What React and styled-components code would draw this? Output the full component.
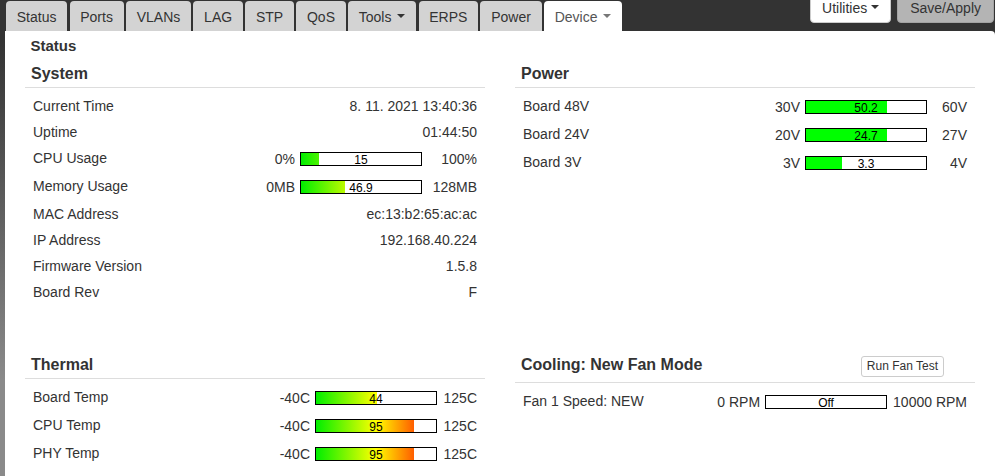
import React from "react";
import styled, { createGlobalStyle } from "styled-components";

const GlobalStyle = createGlobalStyle`
  html, body { margin: 0; padding: 0; height: 100%; overflow: hidden; }
  body {
    background: linear-gradient(to bottom, #333 0, #333 40px, #8a8a8a 380px, #8a8a8a 100%);
    font-family: "Liberation Sans", Arial, sans-serif;
    color: #333;
  }
`;

const TopBar = styled.header`
  display: flex;
  justify-content: space-between;
  align-items: flex-start;
  height: 31px;
  box-sizing: border-box;
  padding: 0 1px 0 6px;
`;

const Tabs = styled.nav`
  display: flex;
  gap: 2.3px;
  align-self: flex-end;
`;

const Tab = styled.div`
  height: 30px;
  box-sizing: border-box;
  padding: 2px 10.75px 0;
  line-height: 28px;
  font-size: 14px;
  border-radius: 4px 4px 0 0;
  background: ${(p) => (p.$active ? "#fff" : "#d3d3d3")};
  color: ${(p) => (p.$active ? "#555" : "#333")};
  white-space: nowrap;
`;

const Caret = styled.span`
  display: inline-block;
  width: 0;
  height: 0;
  margin-left: ${(p) => p.$gap || 5}px;
  margin-bottom: 4px;
  vertical-align: middle;
  border-top: 4px solid ${(p) => p.$color || "#333"};
  border-left: 4px solid transparent;
  border-right: 4px solid transparent;
`;

const Toolbar = styled.div`
  display: flex;
  gap: 6px;
  margin-top: -4px;
`;

const ToolButton = styled.button`
  font: 14px/18px "Liberation Sans", Arial, sans-serif;
  color: #333;
  height: 27px;
  box-sizing: border-box;
  padding: 2px ${(p) => (p.$primary ? 12 : 11)}px 5px;
  border: 1px solid ${(p) => (p.$primary ? "#a3a3a3" : "#ccc")};
  background: ${(p) => (p.$primary ? "#b4b4b4" : "#fff")};
  border-radius: 4px;
  white-space: nowrap;
`;

const Panel = styled.main`
  margin-left: 5px;
  background: #fff;
  border-top-right-radius: 4px;
  min-height: calc(100vh - 31px);
  box-sizing: border-box;
  padding: 6px 20px 0;
`;

const PageTitle = styled.h2`
  margin: 0;
  padding-left: 5.5px;
  font-size: 15px;
  line-height: 18px;
  font-weight: bold;
  color: #333;
`;

const Grid = styled.div`
  display: grid;
  grid-template-columns: 460px 460px;
  column-gap: 30px;
  row-gap: 50px;
  margin-top: 9px;
  align-items: start;
`;

const Section = styled.section``;

const SectionHeader = styled.div`
  display: flex;
  justify-content: space-between;
  align-items: flex-start;
  padding: 0 6px 3px;
  border-bottom: 1px solid #ddd;
`;

const SectionTitle = styled.h3`
  margin: 0;
  font-size: 16px;
  line-height: 20px;
  font-weight: bold;
  color: #333;
`;

const SmallButton = styled.button`
  font: 12px/15px "Liberation Sans", Arial, sans-serif;
  color: #333;
  background: #fff;
  border: 1px solid #ccc;
  border-radius: 3px;
  padding: 2px 5px;
  height: 21px;
  box-sizing: border-box;
  margin: 1px 25px 2px 0;
`;

const Rows = styled.div`
  padding-top: 5px;
`;

const Row = styled.div`
  display: flex;
  justify-content: space-between;
  align-items: flex-start;
  padding: 4px 8px;
  font-size: 14px;
  line-height: 18px;
`;

const Label = styled.span``;
const Value = styled.span`
  text-align: right;
`;

const Gauge = styled.div`
  display: flex;
  align-items: center;
  height: 20px;
`;

const GaugeMin = styled.span`
  text-align: right;
  margin-right: 5px;
  white-space: nowrap;
`;

const GaugeMax = styled.span`
  text-align: right;
  white-space: nowrap;
  flex-shrink: 0;
  ${(p) => (p.$w ? `width: ${p.$w}px;` : "padding-left: 6px;")}
`;

const Bar = styled.div`
  width: 122px;
  height: 14px;
  box-sizing: border-box;
  border: 1px solid #000;
  background: #fff;
  display: grid;
  grid-template-columns: 120px;
  grid-template-rows: 12px;
  flex-shrink: 0;
`;

const Fill = styled.div`
  grid-area: 1 / 1;
  justify-self: start;
  height: 12px;
  background: ${(p) =>
    p.$solid
      ? "#00ff00"
      : "linear-gradient(to right, #00ee00, #ffff00 50%, #ff0000)"};
  background-size: 120px 100%;
`;

const BarText = styled.span`
  grid-area: 1 / 1;
  align-self: start;
  text-align: center;
  font-size: 12px;
  line-height: 14px;
  color: #000;
`;

function Meter({ min, max, minLabel, maxLabel, value, text, solid, maxWidth }) {
  const pct = Math.max(0, Math.min(100, ((value - min) / (max - min)) * 100));
  return (
    <Gauge>
      <GaugeMin>{minLabel}</GaugeMin>
      <Bar>
        <Fill $solid={solid} style={{ width: `${pct}%` }} />
        <BarText>{text ?? value}</BarText>
      </Bar>
      <GaugeMax $w={maxWidth}>{maxLabel}</GaugeMax>
    </Gauge>
  );
}

const tabs = [
  { name: "Status" },
  { name: "Ports" },
  { name: "VLANs" },
  { name: "LAG" },
  { name: "STP" },
  { name: "QoS" },
  { name: "Tools", menu: true },
  { name: "ERPS" },
  { name: "Power" },
  { name: "Device", menu: true, active: true },
];

const systemRows = [
  { label: "Current Time", value: "8. 11. 2021 13:40:36" },
  { label: "Uptime", value: "01:44:50" },
  { label: "CPU Usage", meter: { min: 0, max: 100, minLabel: "0%", maxLabel: "100%", value: 15 } },
  { label: "Memory Usage", meter: { min: 0, max: 128, minLabel: "0MB", maxLabel: "128MB", value: 46.9 } },
  { label: "MAC Address", value: "ec:13:b2:65:ac:ac" },
  { label: "IP Address", value: "192.168.40.224" },
  { label: "Firmware Version", value: "1.5.8" },
  { label: "Board Rev", value: "F" },
];

const powerRows = [
  { label: "Board 48V", meter: { min: 30, max: 60, minLabel: "30V", maxLabel: "60V", value: 50.2, solid: true } },
  { label: "Board 24V", meter: { min: 20, max: 27, minLabel: "20V", maxLabel: "27V", value: 24.7, solid: true } },
  { label: "Board 3V", meter: { min: 3, max: 4, minLabel: "3V", maxLabel: "4V", value: 3.3, solid: true } },
];

const thermalRows = [
  { label: "Board Temp", meter: { min: -40, max: 125, minLabel: "-40C", maxLabel: "125C", value: 44 } },
  { label: "CPU Temp", meter: { min: -40, max: 125, minLabel: "-40C", maxLabel: "125C", value: 95 } },
  { label: "PHY Temp", meter: { min: -40, max: 125, minLabel: "-40C", maxLabel: "125C", value: 95 } },
];

const fanRows = [
  { label: "Fan 1 Speed: NEW", meter: { min: 0, max: 10000, minLabel: "0 RPM", maxLabel: "10000 RPM", value: 0, text: "Off" } },
];

function InfoTable({ rows, maxWidth }) {
  return (
    <Rows>
      {rows.map((r) => (
        <Row key={r.label}>
          <Label>{r.label}</Label>
          {r.meter ? <Meter {...r.meter} maxWidth={maxWidth} /> : <Value>{r.value}</Value>}
        </Row>
      ))}
    </Rows>
  );
}

export default function App() {
  return (
    <>
      <GlobalStyle />
      <TopBar>
        <Tabs>
          {tabs.map((t) => (
            <Tab key={t.name} $active={t.active}>
              {t.name}
              {t.menu && <Caret $gap={6} $color={t.active ? "#777" : "#333"} />}
            </Tab>
          ))}
        </Tabs>
        <Toolbar>
          <ToolButton>
            Utilities
            <Caret $gap={4} />
          </ToolButton>
          <ToolButton $primary>Save/Apply</ToolButton>
        </Toolbar>
      </TopBar>
      <Panel>
        <PageTitle>Status</PageTitle>
        <Grid>
          <Section>
            <SectionHeader>
              <SectionTitle>System</SectionTitle>
            </SectionHeader>
            <InfoTable rows={systemRows} maxWidth={55} />
          </Section>
          <Section>
            <SectionHeader>
              <SectionTitle>Power</SectionTitle>
            </SectionHeader>
            <InfoTable rows={powerRows} maxWidth={40} />
          </Section>
          <Section>
            <SectionHeader>
              <SectionTitle>Thermal</SectionTitle>
            </SectionHeader>
            <InfoTable rows={thermalRows} maxWidth={40} />
          </Section>
          <Section>
            <SectionHeader>
              <SectionTitle>Cooling: New Fan Mode</SectionTitle>
              <SmallButton>Run Fan Test</SmallButton>
            </SectionHeader>
            <InfoTable rows={fanRows} />
          </Section>
        </Grid>
      </Panel>
    </>
  );
}
